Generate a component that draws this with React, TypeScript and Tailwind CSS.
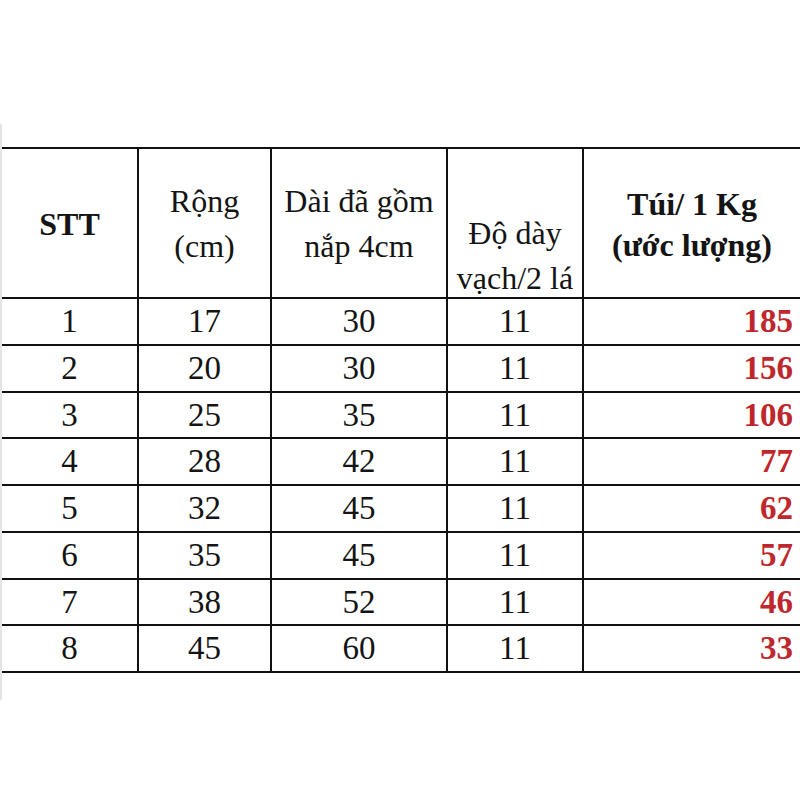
const rows = [
  { stt: 1, rong: 17, dai: 30, day: 11, tui: 185 },
  { stt: 2, rong: 20, dai: 30, day: 11, tui: 156 },
  { stt: 3, rong: 25, dai: 35, day: 11, tui: 106 },
  { stt: 4, rong: 28, dai: 42, day: 11, tui: 77 },
  { stt: 5, rong: 32, dai: 45, day: 11, tui: 62 },
  { stt: 6, rong: 35, dai: 45, day: 11, tui: 57 },
  { stt: 7, rong: 38, dai: 52, day: 11, tui: 46 },
  { stt: 8, rong: 45, dai: 60, day: 11, tui: 33 },
];

const cols = "grid grid-cols-[137px_133px_176px_136px_1fr]";
const cell = "border-r-2 border-[#111]";

export default function App() {
  return (
    <div className="w-[800px] h-[800px] bg-white overflow-hidden pt-[124px] flex text-[#141414] font-['Liberation_Serif','Times_New_Roman',serif]">
      <div className="w-[2px] h-[576px] bg-[#e4e4e4] shrink-0" />
      <div className="flex-1 pt-[23px]">
        <div className="border-t-2 border-[#111]">
          {/* header */}
          <div className={`${cols} h-[150px] border-b-2 border-[#111] text-[32px] leading-[45px]`}>
            <div className={`${cell} pt-[53px] text-center font-bold`}>STT</div>
            <div className={`${cell} pt-[30px] text-center`}>
              Rộng
              <br />
              (cm)
            </div>
            <div className={`${cell} pt-[30px] text-center`}>
              Dài đã gồm
              <br />
              nắp 4cm
            </div>
            <div className={`${cell} pt-[62px] text-center whitespace-nowrap`}>
              Độ dày
              <br />
              vạch/2 lá
            </div>
            <div className="pt-[35px] text-center font-bold leading-[41px]">
              Túi/ 1 Kg
              <br />
              (ước lượng)
            </div>
          </div>
          {rows.map((r) => (
            <div
              key={r.stt}
              className={`${cols} h-[46.75px] border-b-2 border-[#111] text-[33px] leading-[44px]`}
            >
              <div className={`${cell} text-center`}>{r.stt}</div>
              <div className={`${cell} text-center`}>{r.rong}</div>
              <div className={`${cell} text-center`}>{r.dai}</div>
              <div className={`${cell} text-center`}>{r.day}</div>
              <div className="text-right pr-[7px] font-bold text-[#bf272d]">{r.tui}</div>
            </div>
          ))}
        </div>
      </div>
    </div>
  );
}
